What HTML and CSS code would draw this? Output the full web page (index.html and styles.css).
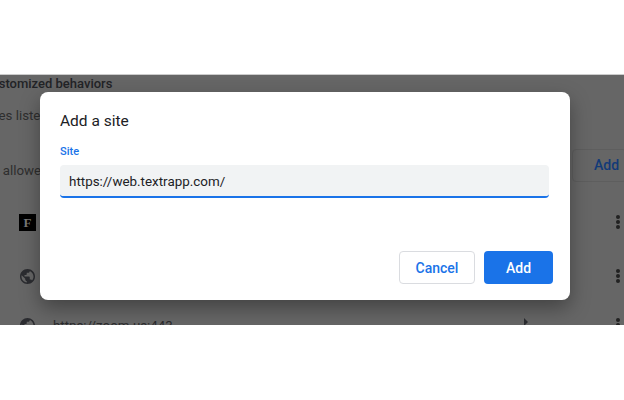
FILE: index.html
```html
<!DOCTYPE html>
<html lang="en">
<head>
    <meta charset="UTF-8">
    <title>Add a site</title>
    <link rel="stylesheet" href="styles.css">
</head>
<body>
    <div class="shot">
        <div class="settings">
            <div class="heading">Customized behaviors</div>
            <div class="note">Sites listed</div>
            <div class="allowed-row">
                <div class="allowed">Sites allowed</div>
                <div class="add-outline">Add</div>
            </div>
            <div class="site-row first-row">
                <div class="favicon">F</div>
                <div class="dots"><i></i><i></i><i></i></div>
            </div>
            <div class="site-row">
                <svg class="globe" viewBox="2 2 20 20"><path d="M12 2C6.48 2 2 6.48 2 12s4.48 10 10 10 10-4.48 10-10S17.52 2 12 2zm-1 17.93c-3.95-.49-7-3.85-7-7.93 0-.62.08-1.21.21-1.79L9 15v1c0 1.1.9 2 2 2v1.93zm6.9-2.54c-.26-.81-1-1.39-1.9-1.39h-1v-3c0-.55-.45-1-1-1H8v-2h2c.55 0 1-.45 1-1V7h2c1.1 0 2-.9 2-2v-.41c2.93 1.19 5 4.06 5 7.41 0 2.08-.8 3.97-2.1 5.39z" fill="#2b2c30"/></svg>
                <div class="dots"><i></i><i></i><i></i></div>
            </div>
            <div class="site-row last-row">
                <svg class="globe" viewBox="2 2 20 20"><path d="M12 2C6.48 2 2 6.48 2 12s4.48 10 10 10 10-4.48 10-10S17.52 2 12 2zm-1 17.93c-3.95-.49-7-3.85-7-7.93 0-.62.08-1.21.21-1.79L9 15v1c0 1.1.9 2 2 2v1.93zm6.9-2.54c-.26-.81-1-1.39-1.9-1.39h-1v-3c0-.55-.45-1-1-1H8v-2h2c.55 0 1-.45 1-1V7h2c1.1 0 2-.9 2-2v-.41c2.93 1.19 5 4.06 5 7.41 0 2.08-.8 3.97-2.1 5.39z" fill="#2b2c30"/></svg>
                <div class="site-url">https://zoom.us:443</div>
                <div class="chevron"></div>
                <div class="dots"><i></i><i></i><i></i></div>
            </div>
        </div>
        <div class="dialog">
            <div class="dialog-title">Add a site</div>
            <label class="field-label">Site</label>
            <div class="field">https://web.textrapp.com/</div>
            <div class="actions">
                <button class="btn btn-cancel">Cancel</button>
                <button class="btn btn-add">Add</button>
            </div>
        </div>
    </div>
</body>
</html>
```

FILE: styles.css
```css
body {
    margin: 0;
    background: #fff;
    font-family: Roboto, "Liberation Sans", sans-serif;
}
.shot {
    position: relative;
    height: 251px;
    margin-top: 74px;
    background: #666;
    border-top: 1px solid #ccc;
    box-sizing: border-box;
    overflow: hidden;
}
.settings {
    margin-left: -17px;
    padding-top: 1px;
    color: #2a2b2d;
    font-size: 13.3px;
}
.heading {
    height: 15px;
    line-height: 15px;
    font-size: 13px;
    font-weight: 500;
    color: #222326;
}
.note {
    margin-top: 17px;
    line-height: 16px;
    color: #2e2e2e;
}
.allowed-row {
    display: flex;
    height: 33px;
    margin-top: 25px;
}
.allowed {
    margin: 14px 0 0 -13px;
    line-height: 16px;
    color: #2e2e2e;
}
.add-outline {
    margin-left: auto;
    margin-right: -3px;
    width: 55px;
    height: 33px;
    line-height: 31px;
    padding-left: 21px;
    box-sizing: border-box;
    border: 1px solid #5e5e5e;
    border-radius: 4px;
    font-size: 14px;
    font-weight: 500;
    color: #123a78;
}
.site-row {
    display: flex;
    align-items: center;
    height: 54px;
    padding-left: 36px;
}
.first-row {
    margin-top: 13px;
}
.last-row {
    height: 44px;
}
.favicon {
    width: 17px;
    height: 17px;
    background: #000;
    color: #777;
    font: bold 13px/17px "Liberation Serif", serif;
    text-align: center;
}
.globe {
    width: 15px;
    height: 15px;
    margin-left: 1px;
}
.site-url {
    margin-left: 18px;
}
.chevron {
    width: 0;
    height: 0;
    margin: -6px 0 0 auto;
    border-left: 4px solid #2b2c30;
    border-top: 4px solid transparent;
    border-bottom: 4px solid transparent;
}
.dots {
    display: flex;
    flex-direction: column;
    gap: 1px;
    margin-left: auto;
    margin-right: 4px;
}
.chevron + .dots {
    margin-left: 88px;
}
.dots i {
    width: 4px;
    height: 4px;
    border-radius: 50%;
    background: #222;
}
.dialog {
    position: absolute;
    left: 40px;
    top: 17px;
    width: 530px;
    height: 208px;
    box-sizing: border-box;
    padding: 20px 17px 16px 20px;
    background: #fff;
    border-radius: 8px;
    box-shadow: 0 8px 20px rgba(0, 0, 0, 0.35);
    display: flex;
    flex-direction: column;
}
.dialog-title {
    font-size: 15.5px;
    line-height: 19px;
    color: #202124;
}
.field-label {
    margin-top: 14px;
    font-size: 11px;
    line-height: 14px;
    font-weight: 500;
    color: #1a73e8;
}
.field {
    margin-top: 6px;
    margin-right: 4px;
    height: 33px;
    line-height: 33px;
    padding-left: 9px;
    box-sizing: border-box;
    background: #f1f3f4;
    border-bottom: 2px solid #1a73e8;
    border-radius: 4px;
    font-size: 13.4px;
    color: #202124;
}
.actions {
    margin-top: auto;
    display: flex;
    justify-content: flex-end;
    gap: 9px;
}
.btn {
    height: 33px;
    border-radius: 4px;
    font-family: Roboto, sans-serif;
    font-size: 14px;
    font-weight: 500;
    cursor: pointer;
}
.btn-cancel {
    width: 76px;
    background: #fff;
    border: 1px solid #dadce0;
    color: #1a73e8;
}
.btn-add {
    width: 69px;
    background: #1a73e8;
    border: none;
    color: #fff;
}
```
